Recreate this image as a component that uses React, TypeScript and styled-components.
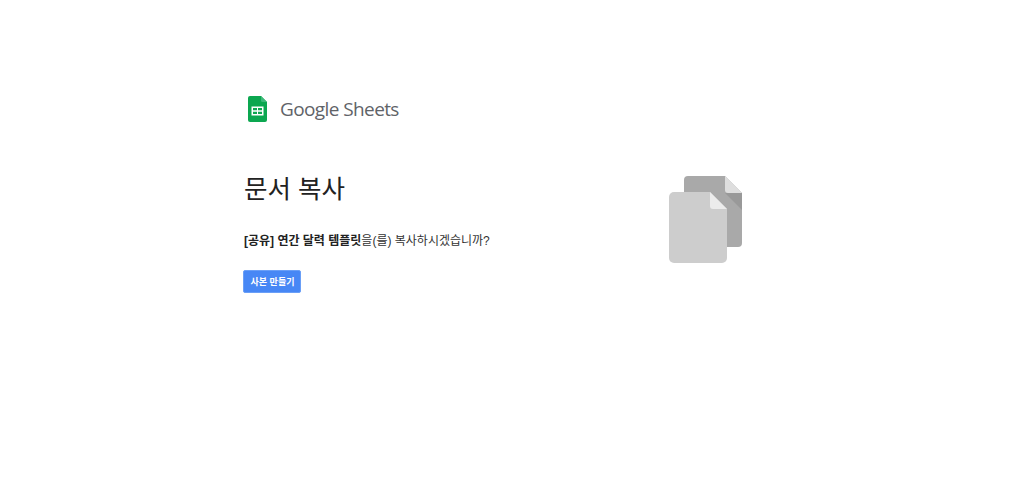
import React from "react";
import styled, { createGlobalStyle } from "styled-components";

const Global = createGlobalStyle`
  html, body { margin: 0; padding: 0; background: #fff; }
  body { font-family: "Liberation Sans", "Noto Sans CJK KR", sans-serif; color: #222; }
`;

const Page = styled.main`
  width: 1024px;
  height: 487px;
  box-sizing: border-box;
  padding: 95px 0 0 243px;
  overflow: hidden;
`;

const Brand = styled.div`
  display: flex;
  align-items: center;
  height: 28px;
  padding-left: 5px;
  gap: 13px;
`;

const Wordmark = styled.span`
  font-family: "Open Sans", sans-serif;
  font-size: 19px;
  letter-spacing: -0.6px;
  color: #5f6368;
  line-height: 28px;
`;

const Content = styled.div`
  display: flex;
  margin-top: 51px;
`;

const Main = styled.div`
  width: 426px;
  display: flex;
  flex-direction: column;
  align-items: flex-start;
`;

const Title = styled.h1`
  margin: 0 0 0 1px;
  font-family: "Liberation Sans", "Noto Sans CJK KR", sans-serif;
  font-size: 25.5px;
  font-weight: 400;
  line-height: 30px;
  color: #222;
`;

const Question = styled.p`
  margin: 28px 0 0 1px;
  font-size: 12px;
  line-height: 18px;
  color: #333;
  & strong { font-weight: 700; color: #222; }
`;

const CopyButton = styled.button`
  margin-top: 20px;
  width: 58px;
  height: 23px;
  padding: 0 0 0 1px;
  box-sizing: border-box;
  border: 1px solid #6a9ff7;
  border-radius: 2px;
  background: #4787f5;
  color: #fff;
  font-family: "Liberation Sans", "Noto Sans CJK KR", sans-serif;
  font-size: 9px;
  font-weight: 700;
`;

const Art = styled.svg`
  display: block;
  margin-top: 2px;
`;

const SheetsLogo = () => (
  <svg width="19" height="26" viewBox="0 0 19 26" aria-hidden="true">
    <path d="M2 0h11l6 6v18a2 2 0 0 1-2 2H2a2 2 0 0 1-2-2V2a2 2 0 0 1 2-2z" fill="#0ca750" />
    <path d="M13 0l6 6h-4.500A1.500 1.500 0 0 1 13 4.500z" fill="#3fb97a" />
    <path d="M3.500 10.500h12V19.500h-12zM5 12v2.200h4V12zm5 0v2.200h4V12zM5 15.700v2.300h4v-2.300zm5 0v2.300h4v-2.300z" fill="#fff" fillRule="evenodd" />
  </svg>
);

const CopyArt = () => (
  <Art width="74" height="88" viewBox="0 0 74 88" aria-hidden="true">
    <path d="M19 0h37l17 17v50a4 4 0 0 1-4 4H19a4 4 0 0 1-4-4V4a4 4 0 0 1 4-4z" fill="#a9a9a9" />
    <path d="M56 17l17 17V17z" fill="#999" />
    <path d="M56 0l17 17H59a3 3 0 0 1-3-3z" fill="#dedede" />
    <path d="M41 33l17 17v21h-8V33z" fill="#9b9b9b" />
    <path d="M5 16h36l17 17v49a5 5 0 0 1-5 5H5a5 5 0 0 1-5-5V21a5 5 0 0 1 5-5z" fill="#cdcdcd" />
    <path d="M41 16l17 17H44a3 3 0 0 1-3-3z" fill="#ececec" />
  </Art>
);

export default function App() {
  return (
    <Page>
      <Global />
      <Brand>
        <SheetsLogo />
        <Wordmark>Google Sheets</Wordmark>
      </Brand>
      <Content>
        <Main>
          <Title>문서 복사</Title>
          <Question>
            <strong>[공유] 연간 달력 템플릿</strong>을(를) 복사하시겠습니까?
          </Question>
          <CopyButton>사본 만들기</CopyButton>
        </Main>
        <CopyArt />
      </Content>
    </Page>
  );
}
